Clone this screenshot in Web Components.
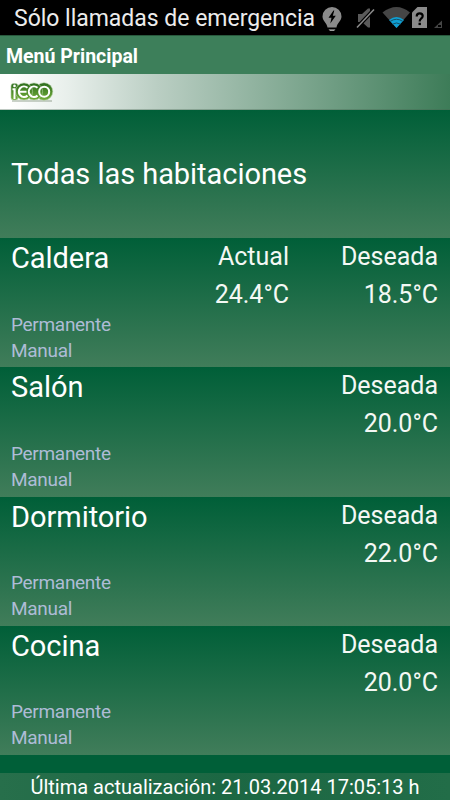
<!DOCTYPE html>
<html lang="es">
<head>
<meta charset="utf-8">
<title>Menú Principal</title>
<style>
    body {
        margin: 0;
        background: #005f38;
        font-family: Roboto, "Noto Sans", sans-serif;
        color: #ffffff;
    }
</style>
</head>
<body>
<heating-app></heating-app>

<script>
class StatusBar extends HTMLElement {
    constructor() {
        super();
        this.attachShadow({ mode: 'open' });
    }

    connectedCallback() {
        this.shadowRoot.innerHTML = `<style>
            :host {
                display: flex;
                height: 35px;
                padding-left: 14px;
                box-sizing: border-box;
                background: #000000;
                color: #ececec;
            }

            .texto {
                width: 304px;
                font-size: 23px;
                line-height: 38px;
                letter-spacing: -0.02px;
                white-space: nowrap;
            }

            svg {
                flex: none;
                display: block;
            }
        </style>
        <span class="texto"><slot></slot></span>
        <svg width="132" height="35" viewBox="318 0 132 35">
            <path d="M332 7a9.500 9.500 0 0 1 9.500 9.500c0 4.500-4.500 6.500-5 11h-9c-.5-4.500-5-6.500-5-11A9.500 9.500 0 0 1 332 7z" fill="#8b8b8b"/>
            <path d="M328.500 29.500h7l-1.500 1.300h-4z" fill="#d0d0d0"/>
            <path d="M333.500 10.500l-5 7.200h3l-1.200 5.800 5.500-7.700h-3l1.500-5.300z" fill="#000"/>
            <path d="M358 14h4l6-5.500h2v19h-2l-6-5.500h-4z" fill="#5a5a5a"/>
            <path d="M357 27.500L374 9.500" stroke="#000" stroke-width="4"/>
            <path d="M357 27.500L374 9.500" stroke="#8b8b8b" stroke-width="1.500"/>
            <path d="M382.500 12.500Q396.500 1.500 410 12.500L396.500 28z" fill="#454545"/>
            <path d="M389 20Q396.500 14 404 20L396.500 28z" fill="#0e9fd3"/>
            <path d="M390 21.500q6.500-4.500 13 0M392.500 24.200q4-2.500 8 0" fill="none" stroke="#174e64" stroke-width="1"/>
            <path d="M417.500 7H427v21h-15V12.500z" fill="#8b8b8b"/>
            <path d="M416.700 16.500q0-3.200 3-3.200t3 2.800q0 1.600-1.800 2.700-1.200.8-1.200 2.700" fill="none" stroke="#000" stroke-width="2.200"/>
            <path d="M418.500 22.700h2.400v2.400h-2.400z" fill="#000"/>
            <path d="M442 20.500V28h-8z" fill="#454545"/>
            <path d="M438 25h3v2h-3z" fill="#000"/>
        </svg>`;
    }
}
customElements.define('status-bar', StatusBar);

class TitleBar extends HTMLElement {
    constructor() {
        super();
        this.attachShadow({ mode: 'open' });
    }

    connectedCallback() {
        this.shadowRoot.innerHTML = `<style>
            :host {
                display: block;
                height: 39px;
                padding-left: 6px;
                box-sizing: border-box;
                background: #3d7f5a;
                border-top: 1px solid #28593d;
                font-size: 19.5px;
                font-weight: 700;
                line-height: 41px;
            }
        </style>
        <slot></slot>`;
    }
}
customElements.define('title-bar', TitleBar);

class LogoStrip extends HTMLElement {
    constructor() {
        super();
        this.attachShadow({ mode: 'open' });
    }

    connectedCallback() {
        this.shadowRoot.innerHTML = `<style>
            :host {
                display: block;
                height: 36px;
                background: linear-gradient(to bottom, transparent 35px, rgba(70, 100, 80, 0.35) 35px),
                            linear-gradient(to right, #ffffff 2%, #e8efeb 15%, #bacec3 35%, #3d7c58);
            }

            svg {
                display: block;
            }
        </style>
        <svg width="70" height="36" viewBox="0 74 70 36">
            <defs>
                <linearGradient id="verde" x1="0" y1="0" x2="0" y2="1">
                    <stop offset="0" stop-color="#2a6b1c"/>
                    <stop offset="1" stop-color="#74ae3a"/>
                </linearGradient>
            </defs>
            <path d="M12 101h40" stroke="#8e9c8a" stroke-width="1.500" opacity=".6"/>
            <g fill="url(#verde)" stroke="#b9d3ac" stroke-width=".6">
                <rect x="11" y="83.500" width="7" height="16.500" rx="2.500"/>
                <circle cx="44" cy="91.500" r="8.800"/>
                <circle cx="34" cy="91.500" r="8.600"/>
                <circle cx="24" cy="91.500" r="8.600"/>
            </g>
            <g fill="none" stroke="#ffffff" stroke-width="2.100">
                <path d="M27.500 87.800a5.200 5.200 0 1 0 0 7.800M19 91.700h7.500M37.500 87.800a5.200 5.200 0 1 0 0 7.800"/>
                <circle cx="44.200" cy="91.700" r="5"/>
            </g>
            <path d="M12.500 89.300h2v9.700" fill="none" stroke="#fff" stroke-width="2"/>
            <circle cx="14.500" cy="85.900" r="1.300" fill="#fff"/>
        </svg>`;
    }
}
customElements.define('logo-strip', LogoStrip);

class TempReading extends HTMLElement {
    constructor() {
        super();
        this.attachShadow({ mode: 'open' });
    }

    connectedCallback() {
        this.shadowRoot.innerHTML = `<style>
            :host {
                display: flex;
                flex-direction: column;
                align-items: flex-end;
                width: 149px;
                font-size: 25px;
                line-height: 38px;
                color: #f4f8f4;
            }

            span {
                white-space: nowrap;
            }
        </style>
        <span>${this.getAttribute('label')}</span>
        <span><slot></slot></span>`;
    }
}
customElements.define('temp-reading', TempReading);

class RoomRow extends HTMLElement {
    constructor() {
        super();
        this.attachShadow({ mode: 'open' });
    }

    connectedCallback() {
        this.shadowRoot.innerHTML = `<style>
            :host {
                display: flex;
                justify-content: space-between;
                height: 129.3px;
                padding: 0 12px 0 11px;
                box-sizing: border-box;
                background: linear-gradient(to bottom, #005f38, #417d5a);
            }

            h2 {
                margin: 0;
                height: 73.5px;
                font-size: 29px;
                font-weight: 400;
                line-height: 40px;
                letter-spacing: -0.05px;
                white-space: nowrap;
            }

            p {
                margin: 0;
                font-size: 19px;
                line-height: 26px;
                letter-spacing: -0.3px;
                color: #aebcd6;
            }

            .lecturas {
                display: flex;
            }

            :host([all]) {
                align-items: center;
                height: 128px;
            }

            :host([all]) h2 {
                height: auto;
            }
        </style>
        <div>
            <h2>${this.getAttribute('name')}</h2>
            ${this.hasAttribute('all') ? '' : '<p>Permanente</p><p>Manual</p>'}
        </div>
        <div class="lecturas"><slot></slot></div>`;
    }
}
customElements.define('room-row', RoomRow);

class UpdateBar extends HTMLElement {
    constructor() {
        super();
        this.attachShadow({ mode: 'open' });
    }

    connectedCallback() {
        this.shadowRoot.innerHTML = `<style>
            :host {
                display: block;
                height: 27px;
                background: linear-gradient(to right, #276f4b, #1c6743 50%, #226d48);
                font-size: 20px;
                line-height: 29px;
                text-align: center;
                white-space: nowrap;
            }
        </style>
        <slot></slot>`;
    }
}
customElements.define('update-bar', UpdateBar);

class HeatingApp extends HTMLElement {
    constructor() {
        super();
        this.attachShadow({ mode: 'open' });
    }

    connectedCallback() {
        this.shadowRoot.innerHTML = `<style>
            :host {
                display: flex;
                flex-direction: column;
                width: 450px;
                height: 800px;
                overflow: hidden;
            }

            status-bar, title-bar, logo-strip, room-row, update-bar {
                flex: none;
            }

            update-bar {
                margin-top: auto;
            }
        </style>
        <status-bar>Sólo llamadas de emergencia</status-bar>
        <title-bar>Menú Principal</title-bar>
        <logo-strip></logo-strip>
        <room-row all name="Todas las habitaciones"></room-row>
        <room-row name="Caldera">
            <temp-reading label="Actual">24.4°C</temp-reading>
            <temp-reading label="Deseada">18.5°C</temp-reading>
        </room-row>
        <room-row name="Salón">
            <temp-reading label="Deseada">20.0°C</temp-reading>
        </room-row>
        <room-row name="Dormitorio">
            <temp-reading label="Deseada">22.0°C</temp-reading>
        </room-row>
        <room-row name="Cocina">
            <temp-reading label="Deseada">20.0°C</temp-reading>
        </room-row>
        <update-bar>Última actualización: 21.03.2014 17:05:13 h</update-bar>`;
    }
}
customElements.define('heating-app', HeatingApp);
</script>
</body>
</html>
